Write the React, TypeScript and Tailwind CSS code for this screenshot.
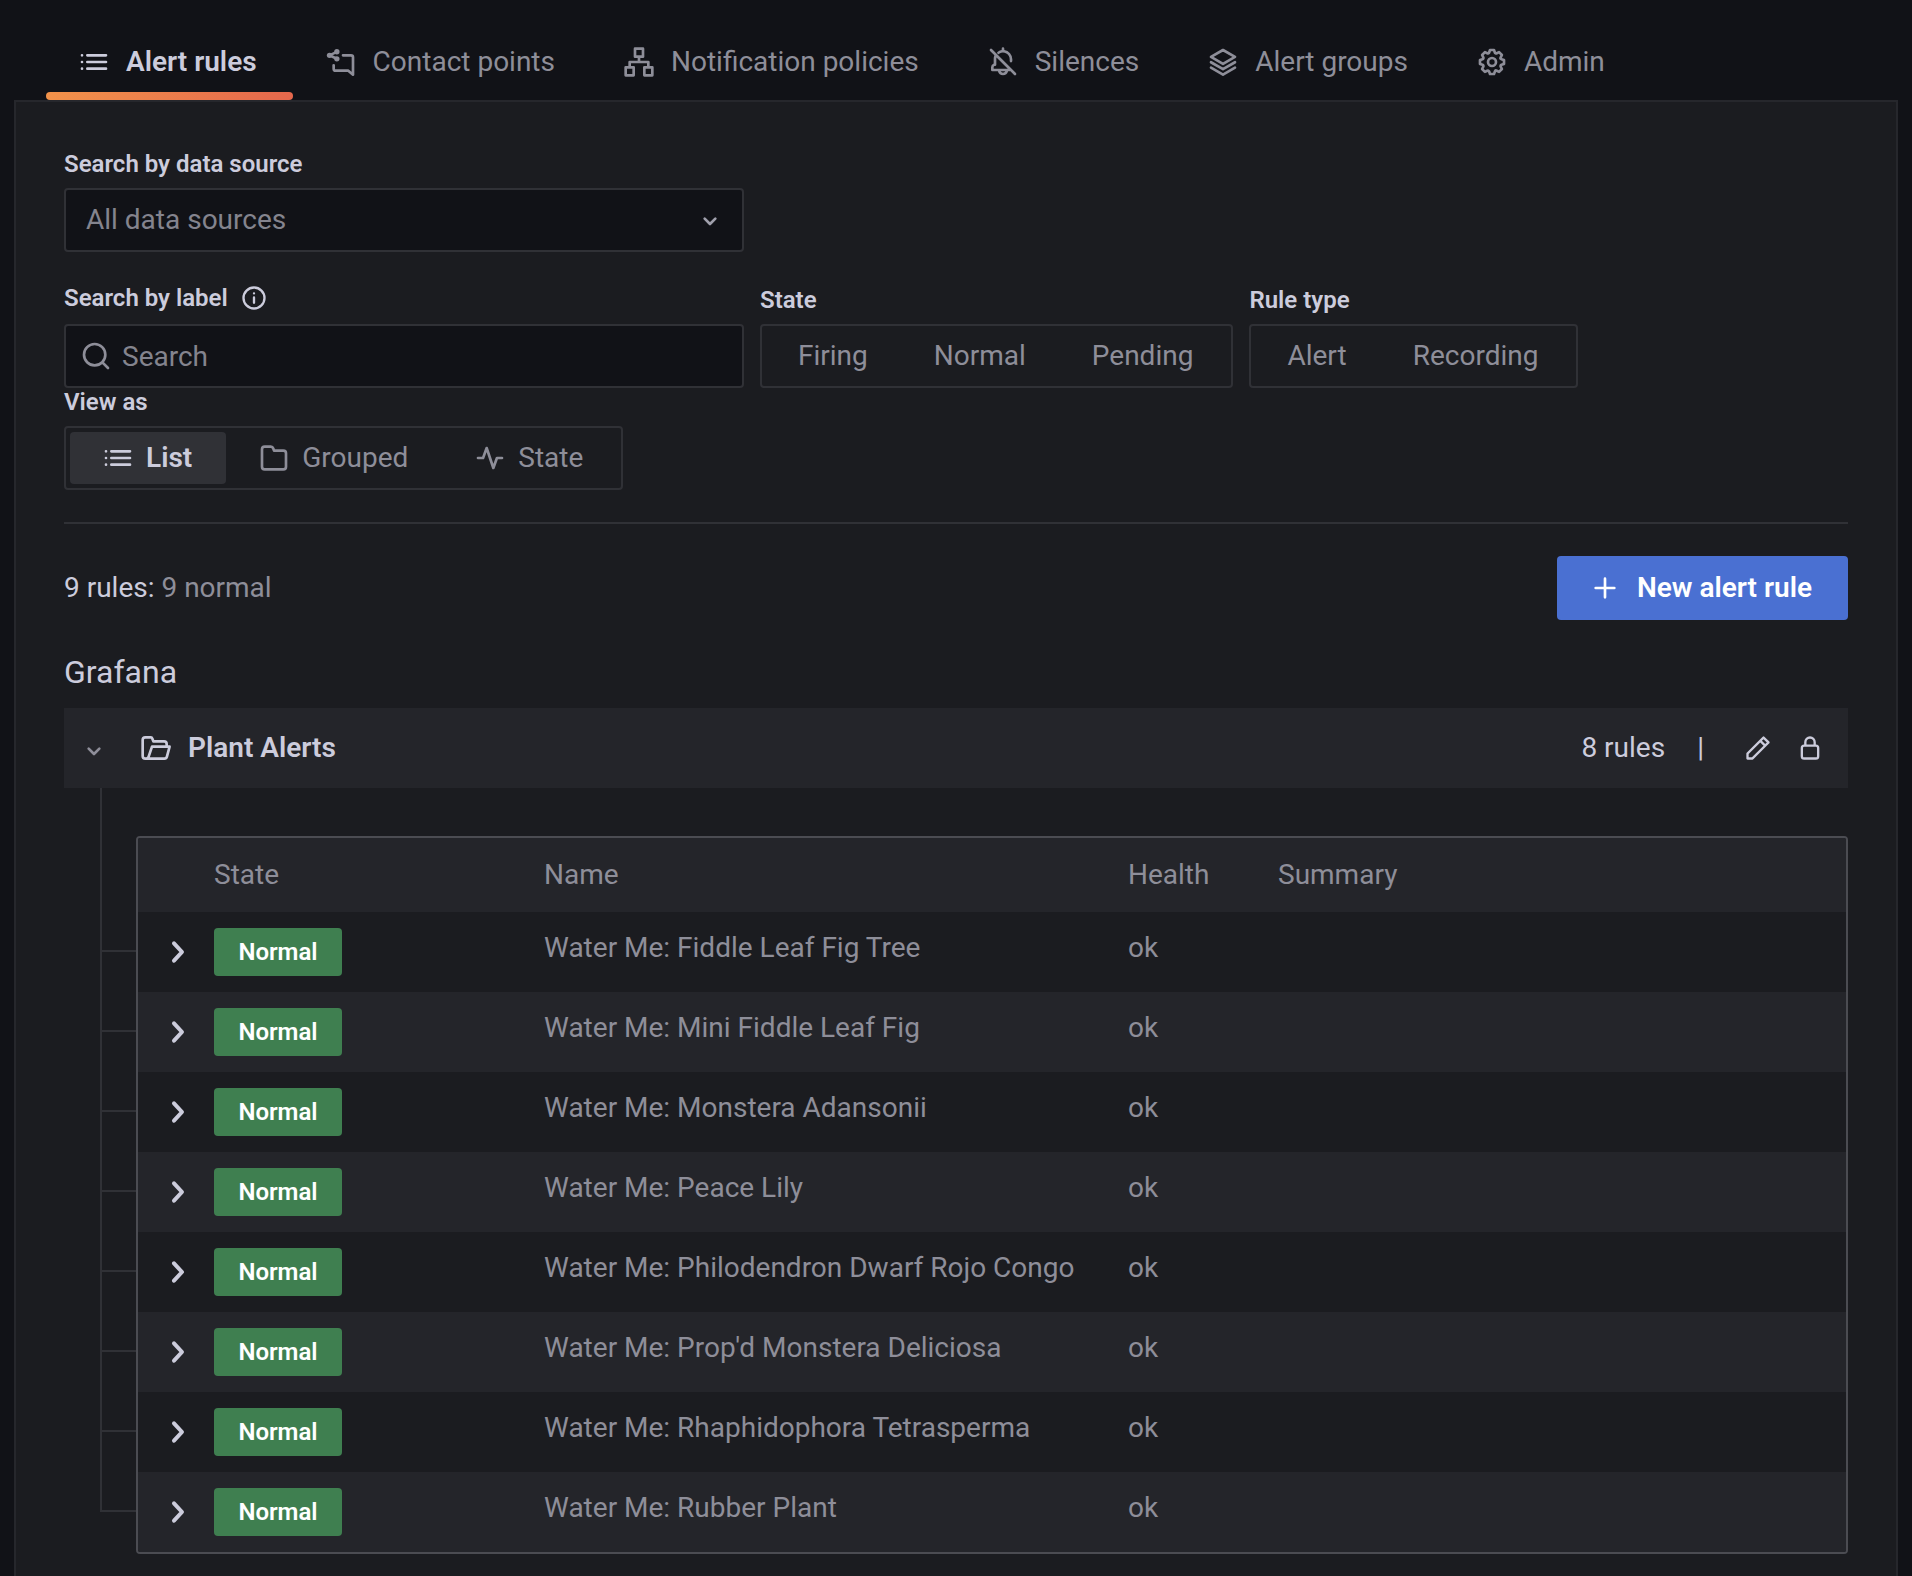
import { ReactNode, useState } from 'react'

function Icon({ size = 'w-8 h-8', className = '', children }: { size?: string; className?: string; children: ReactNode }) {
  return (
    <svg viewBox="0 0 24 24" fill="currentColor" aria-hidden="true" className={`shrink-0 ${size} ${className}`}>
      {children}
    </svg>
  )
}

const stroke = {
  fill: 'none',
  stroke: 'currentColor',
  strokeWidth: 2,
  strokeLinecap: 'round',
  strokeLinejoin: 'round',
} as const

const ListIcon = () => (
  <Icon>
    <path {...stroke} d="M3 7h.01M3 12h.01M3 17h.01M7 7h14M7 12h14M7 17h14" />
  </Icon>
)

const ShareIcon = () => (
  <Icon>
    <g {...stroke}>
      <path d="M13.5 7h6a1.5 1.5 0 0 1 1.5 1.5v13l-3.5-3H8a1.5 1.5 0 0 1-1.5-1.5v-2.5" />
      <path d="M8.8 4.4L3.4 7l5.4 2.5" />
    </g>
    <circle cx="8.9" cy="4.3" r="2" />
    <circle cx="3.4" cy="7" r="2" />
    <circle cx="8.9" cy="9.6" r="2" />
  </Icon>
)

const SitemapIcon = () => (
  <Icon>
    <path {...stroke} d="M9 2h6v6H9zM2 16h6v6H2zM16 16h6v6h-6zM12 8v4M5 16v-4h14v4" />
  </Icon>
)

const BellSlashIcon = () => (
  <Icon>
    <path
      fillRule="evenodd"
      d="M21.71 20.29l-18-18a1 1 0 0 0-1.42 1.42L5.53 7A6.9 6.9 0 0 0 5 9.99v3.18A3 3 0 0 0 3 16v2a1 1 0 0 0 1 1h4.14a4 4 0 0 0 7.72 0h1.73l2.7 2.71a1 1 0 0 0 1.42-1.42zM12 20a2 2 0 0 1-1.72-1h3.44A2 2 0 0 1 12 20zm-7-3v-1a1 1 0 0 1 1-1 1 1 0 0 0 1-1v-4a5 5 0 0 1 .14-1.45L15.59 17zM9.4 5.69A5 5 0 0 1 17 10v1.34a1 1 0 0 0 2 0V10a7 7 0 0 0-6-6.92V2a1 1 0 0 0-2 0v1.08a6.7 6.7 0 0 0-2.64 1A1 1 0 1 0 9.4 5.69z"
    />
  </Icon>
)

const LayersIcon = () => (
  <Icon>
    <path {...stroke} d="M12 3l9 5.2-9 5.2-9-5.2zM3 12.2l9 5.2 9-5.2M3 16.2l9 5.2 9-5.2" />
  </Icon>
)

const CogIcon = () => (
  <Icon>
    <path d="M21.32,9.55l-1.89-.63.89-1.78A1,1,0,0,0,20.13,6L18,3.87a1,1,0,0,0-1.15-.19l-1.78.89-.63-1.89A1,1,0,0,0,13.5,2h-3a1,1,0,0,0-.95.68L8.92,4.57,7.14,3.68A1,1,0,0,0,6,3.87L3.87,6a1,1,0,0,0-.19,1.15l.89,1.78-1.89.63A1,1,0,0,0,2,10.5v3a1,1,0,0,0,.68.95l1.89.63-.89,1.78A1,1,0,0,0,3.87,18L6,20.13a1,1,0,0,0,1.15.19l1.78-.89.63,1.89a1,1,0,0,0,.95.68h3a1,1,0,0,0,.95-.68l.63-1.89,1.78.89A1,1,0,0,0,18,20.13L20.13,18a1,1,0,0,0,.19-1.15l-.89-1.78,1.89-.63A1,1,0,0,0,22,13.5v-3A1,1,0,0,0,21.32,9.55ZM20,12.78l-1.2.4A2,2,0,0,0,17.64,16l.57,1.14-1.1,1.1L16,17.64a2,2,0,0,0-2.79,1.16l-.4,1.2H11.22l-.4-1.2A2,2,0,0,0,8,17.64l-1.14.57-1.1-1.1L6.36,16A2,2,0,0,0,5.2,13.18L4,12.78V11.22l1.2-.4A2,2,0,0,0,6.36,8L5.79,6.89l1.1-1.1L8,6.36A2,2,0,0,0,10.82,5.2l.4-1.2h1.56l.4,1.2A2,2,0,0,0,16,6.36l1.14-.57,1.1,1.1L17.64,8a2,2,0,0,0,1.16,2.79l1.2.4ZM12,8a4,4,0,1,0,4,4A4,4,0,0,0,12,8Zm0,6a2,2,0,1,1,2-2A2,2,0,0,1,12,14Z" />
  </Icon>
)

const FolderIcon = () => (
  <Icon>
    <path d="M19,5.5H12.72l-.32-1a3,3,0,0,0-2.84-2H5a3,3,0,0,0-3,3v13a3,3,0,0,0,3,3H19a3,3,0,0,0,3-3V8.5A3,3,0,0,0,19,5.5Zm1,13a1,1,0,0,1-1,1H5a1,1,0,0,1-1-1V5.5a1,1,0,0,1,1-1H9.56a1,1,0,0,1,.95.68l.54,1.64A1,1,0,0,0,12,7.5h7a1,1,0,0,1,1,1Z" />
  </Icon>
)

const PulseIcon = () => (
  <Icon>
    <path {...stroke} d="M3 12h3.8L9.5 4.5l5 15 2.7-7.5H21" />
  </Icon>
)

const FolderOpenIcon = () => (
  <Icon>
    <path
      {...stroke}
      d="M4.6 20H4a2 2 0 0 1-2-2V6a2 2 0 0 1 2-2h4.2a1 1 0 0 1 .95.68L10 7h8a2 2 0 0 1 2 2v2M9 11h13.2l-2 7.5A2 2 0 0 1 18.3 20H4.6a2 2 0 0 0 1.9-1.5z"
    />
  </Icon>
)

const PenIcon = () => (
  <Icon size="w-7 h-7">
    <path d="M22,7.24a1,1,0,0,0-.29-.71L17.47,2.29A1,1,0,0,0,16.76,2a1,1,0,0,0-.71.29L13.22,5.12h0L2.29,16.05a1,1,0,0,0-.29.71V21a1,1,0,0,0,1,1H7.24A1,1,0,0,0,8,21.71L18.87,10.78h0L21.71,8a1.19,1.19,0,0,0,.22-.33,1,1,0,0,0,0-.24.7.7,0,0,0,0-.14ZM6.83,20H4V17.17l9.93-9.93,2.83,2.83ZM18.17,8.66,15.34,5.83l1.42-1.41,2.82,2.82Z" />
  </Icon>
)

const LockIcon = () => (
  <Icon size="w-7 h-7">
    <path d="M17,9V7A5,5,0,0,0,7,7V9a3,3,0,0,0-3,3v7a3,3,0,0,0,3,3H17a3,3,0,0,0,3-3V12A3,3,0,0,0,17,9ZM9,7a3,3,0,0,1,6,0V9H9Zm9,12a1,1,0,0,1-1,1H7a1,1,0,0,1-1-1V12a1,1,0,0,1,1-1H17a1,1,0,0,1,1,1Z" />
  </Icon>
)

const AngleDownIcon = ({ className = '' }: { className?: string }) => (
  <Icon className={className}>
    <path {...stroke} d="M8 11l4 4 4-4" />
  </Icon>
)

const tabs = [
  { label: 'Alert rules', icon: <ListIcon /> },
  { label: 'Contact points', icon: <ShareIcon /> },
  { label: 'Notification policies', icon: <SitemapIcon /> },
  { label: 'Silences', icon: <BellSlashIcon /> },
  { label: 'Alert groups', icon: <LayersIcon /> },
  { label: 'Admin', icon: <CogIcon /> },
]

const rules = [
  'Water Me: Fiddle Leaf Fig Tree',
  'Water Me: Mini Fiddle Leaf Fig',
  'Water Me: Monstera Adansonii',
  'Water Me: Peace Lily',
  'Water Me: Philodendron Dwarf Rojo Congo',
  "Water Me: Prop'd Monstera Deliciosa",
  'Water Me: Rhaphidophora Tetrasperma',
  'Water Me: Rubber Plant',
]

type Option = { label: string; icon?: ReactNode }

function RadioGroup({ name, label, options, initial = '' }: { name: string; label: string; options: Option[]; initial?: string }) {
  const [value, setValue] = useState(initial)
  return (
    <div role="radiogroup" aria-labelledby={`${name}-label`}>
      <div id={`${name}-label`} className="text-2xl leading-7 font-semibold mb-2.5">
        {label}
      </div>
      <div className="inline-flex h-16 rounded border-2 border-[#303136] p-1">
        {options.map((option) => (
          <label
            key={option.label}
            className="flex items-center gap-3 pl-8 pr-[34px] rounded text-[#8e8e99] cursor-pointer has-checked:bg-[#303136] has-checked:text-[#ccccdc] has-checked:font-semibold"
          >
            <input
              type="radio"
              name={name}
              className="sr-only"
              checked={value === option.label}
              onChange={() => setValue(option.label)}
            />
            {option.icon}
            {option.label}
          </label>
        ))}
      </div>
    </div>
  )
}

export default function App() {
  return (
    <div className="min-h-screen flex flex-col bg-[#111217] text-[#ccccdc] font-[Roboto,sans-serif] text-[28px] leading-10 px-3.5">
      <nav className="flex h-25 pt-6 pl-8">
        {tabs.map((tab, i) => (
          <a
            key={tab.label}
            href="#"
            aria-current={i === 0 ? 'page' : undefined}
            className="relative flex items-center gap-4 pl-8 pr-9 text-[#8e8e99] aria-[current=page]:text-[#ccccdc] aria-[current=page]:font-semibold"
          >
            {tab.icon}
            {tab.label}
            {i === 0 && (
              <span className="absolute inset-x-0 bottom-0 h-2 rounded bg-linear-to-r from-[#f2924a] to-[#e5674c]" />
            )}
          </a>
        ))}
      </nav>

      <main className="flex-1 border-2 border-b-0 border-[#26272c] bg-[#1b1c20] px-12 pt-12 pb-5">
        <label htmlFor="data-source" className="block text-2xl leading-7 font-semibold mb-2.5">
          Search by data source
        </label>
        <div className="relative w-[680px]">
          <select
            id="data-source"
            className="appearance-none w-full h-16 rounded border-2 border-[#303136] bg-[#111217] px-5 text-[#84848e]"
          >
            <option>All data sources</option>
          </select>
          <AngleDownIcon className="absolute right-[18px] top-4 text-[#a0a0ac] pointer-events-none" />
        </div>

        <div className="flex flex-wrap items-end gap-x-4 mt-8">
          <div className="w-[680px]">
            <div className="flex items-center gap-3 mb-3">
              <label htmlFor="label-search" className="text-2xl leading-7 font-semibold">
                Search by label
              </label>
              <Icon size="w-7 h-7">
                <circle cx="12" cy="12" r="9" {...stroke} />
                <path {...stroke} d="M12 11.5v4.5M12 8h.01" />
              </Icon>
            </div>
            <div className="flex items-center h-16 rounded border-2 border-[#303136] bg-[#111217] pl-3.5">
              <Icon className="text-[#8e8e99]">
                <path {...stroke} d="M11 3a8 8 0 1 0 0 16a8 8 0 0 0 0-16zM17 17l4 4" />
              </Icon>
              <input
                id="label-search"
                type="text"
                placeholder="Search"
                className="flex-1 h-full bg-transparent px-2.5 outline-none placeholder:text-[#84848e]"
              />
            </div>
          </div>
          <RadioGroup
            name="state"
            label="State"
            options={[{ label: 'Firing' }, { label: 'Normal' }, { label: 'Pending' }]}
          />
          <RadioGroup name="rule-type" label="Rule type" options={[{ label: 'Alert' }, { label: 'Recording' }]} />
        </div>

        <RadioGroup
          name="view"
          label="View as"
          initial="List"
          options={[
            { label: 'List', icon: <ListIcon /> },
            { label: 'Grouped', icon: <FolderIcon /> },
            { label: 'State', icon: <PulseIcon /> },
          ]}
        />

        <hr className="mt-8 mb-8 border-t-2 border-[#303136]" />

        <div className="flex items-center justify-between">
          <p>
            9 rules: <span className="text-[#8e8e99]">9 normal</span>
          </p>
          <button className="flex items-center gap-4 h-16 pl-8 pr-9 rounded bg-[#4a70d2] text-white font-semibold">
            <Icon>
              <path {...stroke} d="M5 12h14M12 5v14" />
            </Icon>
            New alert rule
          </button>
        </div>

        <h2 className="text-[32px] leading-10 mt-8 mb-4">Grafana</h2>

        <div className="flex items-center h-20 bg-[#24252a] px-3.5">
          <button aria-label="Collapse Plant Alerts" className="pt-1 mr-[30px] text-[#8e8e99]">
            <AngleDownIcon />
          </button>
          <FolderOpenIcon />
          <h3 className="ml-4 font-semibold">Plant Alerts</h3>
          <span className="ml-auto">8 rules</span>
          <span className="ml-8 mr-10">|</span>
          <button aria-label="Edit folder" className="mr-6">
            <PenIcon />
          </button>
          <button aria-label="Manage permissions" className="mr-2.5">
            <LockIcon />
          </button>
        </div>

        <div className="flex">
          {/* tree lines that join each rule to its folder */}
          <div className="w-9 ml-9 shrink-0">
            {rules.map((rule) => (
              <div key={rule} className="h-20 first:h-41 border-l-2 border-b-2 border-[#303136]" />
            ))}
          </div>
          <div className="flex-1 mt-12 rounded border-2 border-[#4b4c52] overflow-hidden">
            <table className="w-full table-fixed text-left text-[#8e8e99]">
              <thead>
                <tr className="h-[74px] bg-[#24252a]">
                  <th className="w-[76px]" />
                  <th className="w-[330px] font-normal">State</th>
                  <th className="w-[584px] font-normal">Name</th>
                  <th className="w-[150px] font-normal">Health</th>
                  <th className="font-normal">Summary</th>
                </tr>
              </thead>
              <tbody>
                {rules.map((rule) => (
                  <tr key={rule} className="h-20 even:bg-[#24252a]">
                    <td className="pl-6">
                      <button aria-label={`Expand ${rule}`} className="block text-[#ccccdc]">
                        <Icon>
                          <path {...stroke} strokeWidth={3} d="M9 5.5l6 6.5-6 6.5" />
                        </Icon>
                      </button>
                    </td>
                    <td>
                      <span className="flex w-32 h-12 items-center justify-center rounded bg-[#3f7f50] text-2xl font-semibold text-white">
                        Normal
                      </span>
                    </td>
                    <td className="pb-2">{rule}</td>
                    <td className="pb-2">ok</td>
                    <td />
                  </tr>
                ))}
              </tbody>
            </table>
          </div>
        </div>
      </main>
    </div>
  )
}
